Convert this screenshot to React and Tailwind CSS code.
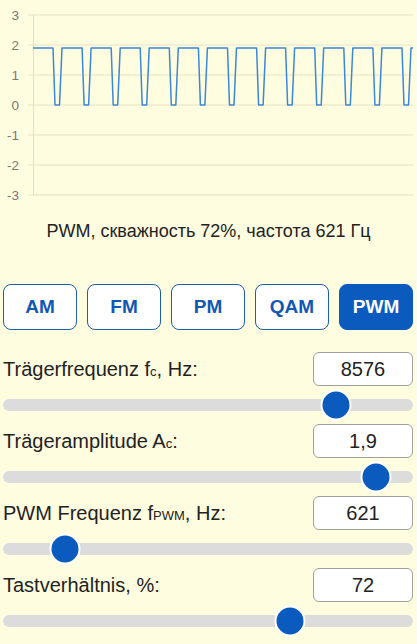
import React from "react";

function Chart() {
  const yTicks = [3, 2, 1, 0, -1, -2, -3];
  const yOf = (v) => 105 - v * 30;
  const hi = yOf(1.9);
  const lo = yOf(0);
  const pts = [[33, hi]];
  const period = 29.08;
  for (let k = 0; k < 13; k++) {
    const x0 = 53 + period * k;
    pts.push([x0, hi], [x0 + 2, lo], [x0 + 6.5, lo], [x0 + 9, hi]);
  }
  pts.push([413, hi]);
  const d = pts.map((p) => p[0].toFixed(1) + "," + p[1].toFixed(1)).join(" ");
  return (
    <svg width="417" height="205" viewBox="0 0 417 205" className="block">
      {yTicks.map((v) => (
        <g key={v}>
          <line x1="28" x2="413" y1={yOf(v)} y2={yOf(v)} stroke="#e7e3c3" strokeWidth="1" />
          <text
            x="19"
            y={yOf(v) + 4.7}
            textAnchor="end"
            fontSize="13.5"
            fill="#777"
            fontFamily="'Liberation Sans', Arial, sans-serif"
          >
            {v}
          </text>
        </g>
      ))}
      <line x1="33.5" x2="33.5" y1="15" y2="195" stroke="#e2dec0" strokeWidth="1" />
      <polyline points={d} fill="none" stroke="#3b87d8" strokeWidth="1.5" strokeLinejoin="round" />
    </svg>
  );
}

function Row({ label, value, thumbX }) {
  return (
    <div className="flex flex-col">
      <div className="flex h-[34px] items-center justify-between">
        <div className="text-[20px] text-[#222]">{label}</div>
        <div className="flex h-[34px] w-[100px] items-center justify-center rounded-[6px] border border-[#a0a0a0] bg-white text-[20px] text-[#222]">
          {value}
        </div>
      </div>
      <div className="relative flex h-[38px] items-center">
        <div className="h-[12px] w-full rounded-full bg-[#dcdcdc]" />
        <div
          className="absolute top-1/2 h-[31px] w-[31px] -translate-x-1/2 -translate-y-1/2 rounded-full border-2 border-white bg-[#0a5bbd]"
          style={{ left: thumbX - 3 }}
        />
      </div>
    </div>
  );
}

export default function App() {
  const buttons = ["AM", "FM", "PM", "QAM", "PWM"];
  return (
    <div
      className="h-[644px] w-[417px] overflow-hidden bg-[#fffde0]"
      style={{ fontFamily: "'Liberation Sans', Arial, sans-serif" }}
    >
      <Chart />
      <div className="mt-[16px] text-center text-[18px] leading-[20px] text-[#222]">
        PWM, скважность 72%, частота 621 Гц
      </div>
      <div className="mt-[43px] flex gap-[10px] pl-[3px] pr-[4px]">
        {buttons.map((b) => (
          <div
            key={b}
            className={
              b === "PWM"
                ? "flex h-[46px] w-[74px] items-center justify-center rounded-[8px] border border-[#0a5bbd] bg-[#0a5bbd] text-[19px] font-bold text-white"
                : "flex h-[46px] w-[74px] items-center justify-center rounded-[8px] border border-[#1d5faa] bg-white text-[19px] font-bold text-[#1158b3]"
            }
          >
            {b}
          </div>
        ))}
      </div>
      <div className="mt-[22px] flex flex-col pl-[3px] pr-[4px]">
        <Row
          label={
            <span>
              Trägerfrequenz f<span className="text-[13px]">c</span>, Hz:
            </span>
          }
          value="8576"
          thumbX={336}
        />
        <Row
          label={
            <span>
              Trägeramplitude A<span className="text-[13px]">c</span>:
            </span>
          }
          value="1,9"
          thumbX={376}
        />
        <Row
          label={
            <span>
              PWM Frequenz f<span className="text-[13px]">PWM</span>, Hz:
            </span>
          }
          value="621"
          thumbX={65}
        />
        <Row label="Tastverhältnis, %:" value="72" thumbX={290} />
      </div>
    </div>
  );
}
